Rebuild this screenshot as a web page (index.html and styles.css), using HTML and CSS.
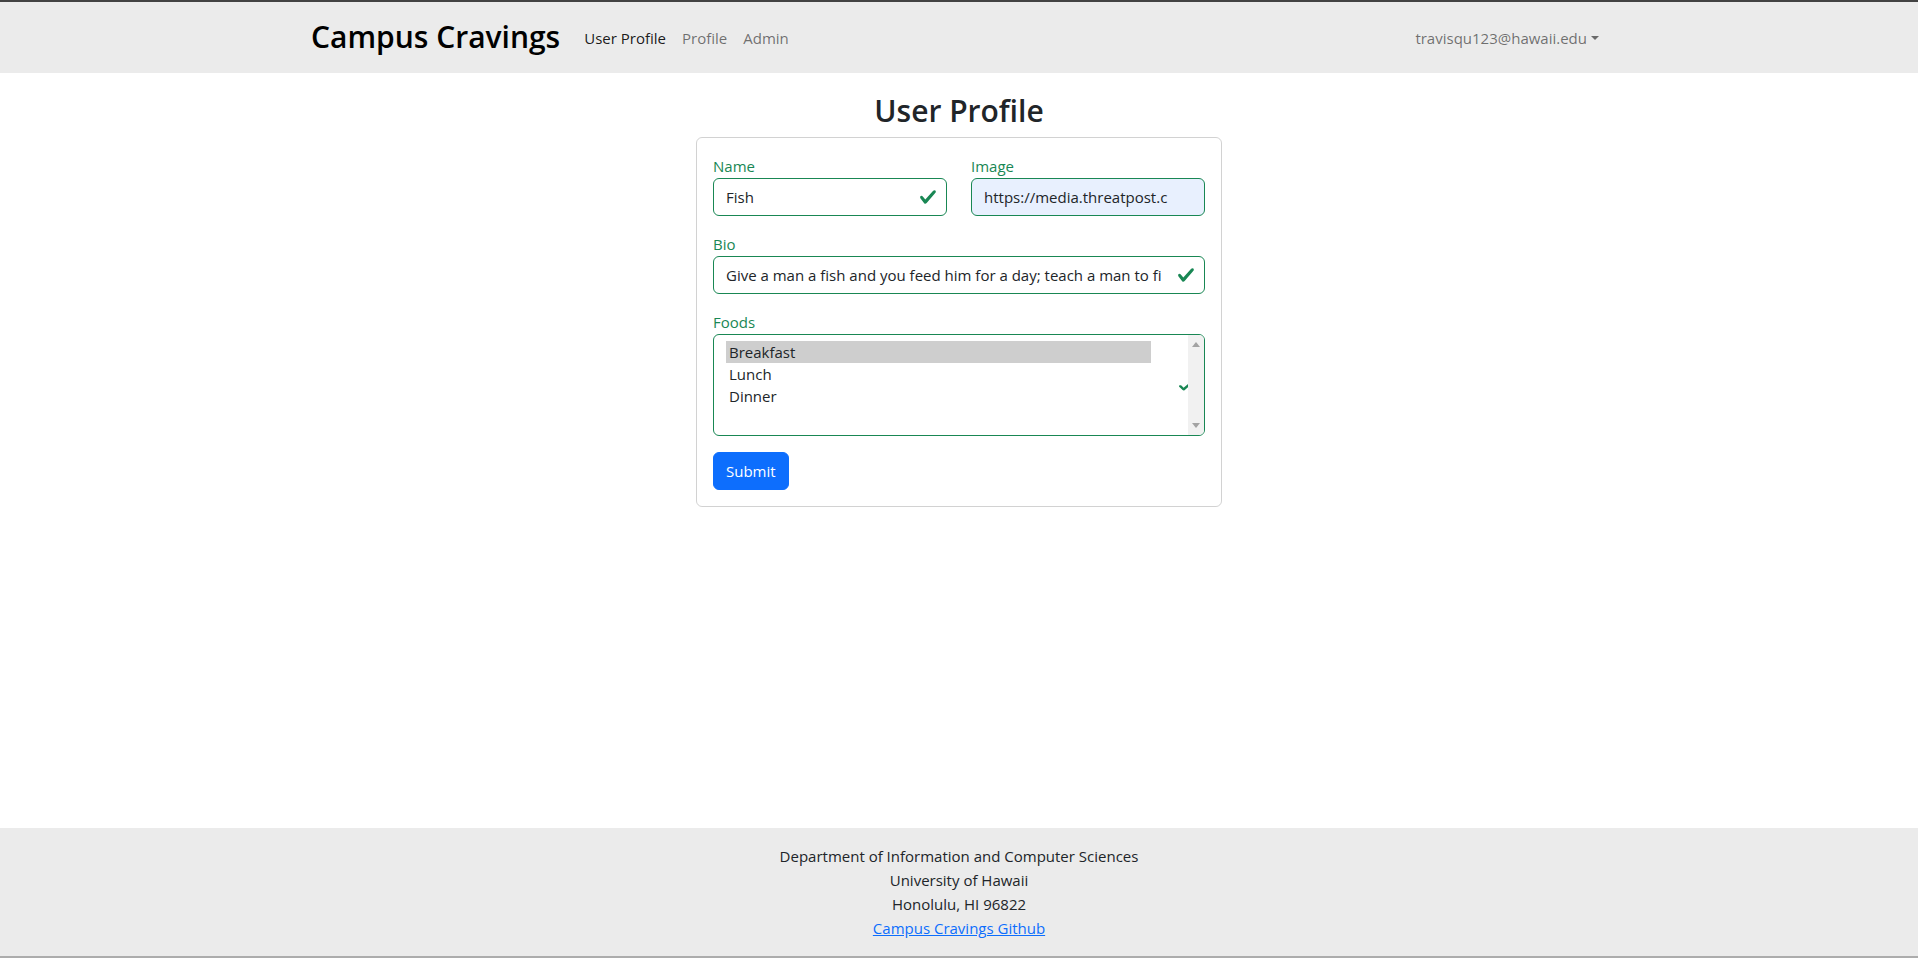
FILE: index.html
```html
<!DOCTYPE html>
<html lang="en">
<head>
<meta charset="utf-8">
<title>Campus Cravings - User Profile</title>
<link rel="stylesheet" href="styles.css">
</head>
<body>
<header class="navbar">
  <div class="container nav-inner">
    <a class="brand" href="#">Campus Cravings</a>
    <nav class="nav-links">
      <a class="nav-link active" href="#">User Profile</a>
      <a class="nav-link" href="#">Profile</a>
      <a class="nav-link" href="#">Admin</a>
    </nav>
    <div class="nav-right">
      <a class="nav-link dropdown-toggle" href="#">travisqu123@hawaii.edu</a>
    </div>
  </div>
</header>

<main class="main">
  <h2 class="page-title">User Profile</h2>
  <form class="card">
    <div class="form-row">
      <div class="field">
        <label class="label">Name</label>
        <div class="input valid">
          <span class="input-text">Fish</span>
          <svg class="check" viewBox="0 0 8 8"><path fill="#198754" d="M2.3 6.73.6 4.53c-.4-1.04.46-1.4 1.1-.8l1.1 1.4 3.4-3.8c.6-.63 1.6-.27 1.2.7l-4 4.6c-.43.5-.8.4-1.1.1z"/></svg>
        </div>
      </div>
      <div class="field">
        <label class="label">Image</label>
        <div class="input autofill">
          <span class="input-text">https://media.threatpost.c</span>
        </div>
      </div>
    </div>
    <div class="field">
      <label class="label">Bio</label>
      <div class="input valid">
        <span class="input-text">Give a man a fish and you feed him for a day; teach a man to fi</span>
        <svg class="check" viewBox="0 0 8 8"><path fill="#198754" d="M2.3 6.73.6 4.53c-.4-1.04.46-1.4 1.1-.8l1.1 1.4 3.4-3.8c.6-.63 1.6-.27 1.2.7l-4 4.6c-.43.5-.8.4-1.1.1z"/></svg>
      </div>
    </div>
    <div class="field">
      <label class="label">Foods</label>
      <div class="listbox" role="listbox">
        <div class="option selected">Breakfast</div>
        <div class="option">Lunch</div>
        <div class="option">Dinner</div>
        <svg class="list-check" viewBox="0 0 8 8" preserveAspectRatio="none"><path fill="#198754" d="M2.3 6.73.6 4.53c-.4-1.04.46-1.4 1.1-.8l1.1 1.4 3.4-3.8c.6-.63 1.6-.27 1.2.7l-4 4.6c-.43.5-.8.4-1.1.1z"/></svg>
        <div class="scrollbar">
          <span class="arrow up"></span>
          <span class="arrow down"></span>
        </div>
      </div>
    </div>
    <div class="actions">
      <button type="button" class="btn">Submit</button>
    </div>
  </form>
</main>

<footer class="footer">
  <div>Department of Information and Computer Sciences</div>
  <div>University of Hawaii</div>
  <div>Honolulu, HI 96822</div>
  <div><a href="#" class="footer-link">Campus Cravings Github</a></div>
</footer>
</body>
</html>
```

FILE: styles.css
```css
* { box-sizing: border-box; }

html, body { height: 100%; }

body {
  margin: 0;
  min-height: 100vh;
  display: flex;
  flex-direction: column;
  font-family: "Open Sans", "Noto Sans", sans-serif;
  font-size: 15px;
  line-height: 24px;
  color: #212529;
  background: #fff;
}

a { text-decoration: none; }

.container {
  width: 100%;
  max-width: 1320px;
  margin: 0 auto;
  padding: 0 12px;
}

/* Navbar */
.navbar {
  background: #ebebeb;
  border-top: 2px solid #424242;
  height: 73px;
  display: flex;
  align-items: center;
}

.nav-inner {
  display: flex;
  align-items: center;
  margin-top: -2px;
}

.brand {
  font-size: 30px;
  font-weight: 600;
  color: #000;
  margin-right: 16px;
  line-height: 40px;
}

.nav-links {
  display: flex;
  align-items: center;
  padding-top: 2px;
}

.nav-link {
  padding: 8px 8px;
  color: rgba(0, 0, 0, 0.55);
  font-size: 15px;
}

.nav-link.active { color: rgba(0, 0, 0, 0.9); }

.nav-right {
  margin-left: auto;
  display: flex;
  padding-top: 2px;
}

.dropdown-toggle::after {
  content: "";
  display: inline-block;
  margin-left: 4px;
  vertical-align: 4px;
  border-top: 4.5px solid;
  border-left: 4px solid transparent;
  border-right: 4px solid transparent;
}

/* Main */
.main {
  flex: 1;
  display: flex;
  flex-direction: column;
  align-items: center;
  padding-top: 19px;
}

.page-title {
  margin: 0 0 7px;
  font-size: 30px;
  font-weight: 600;
  line-height: 38px;
  color: #212529;
}

.card {
  width: 526px;
  border: 1px solid rgba(0, 0, 0, 0.175);
  border-radius: 6px;
  padding: 16px;
  display: flex;
  flex-direction: column;
  gap: 16px;
  margin: 0;
}

.form-row {
  display: grid;
  grid-template-columns: minmax(0, 1fr) minmax(0, 1fr);
  column-gap: 24px;
}

.field {
  display: flex;
  flex-direction: column;
  min-width: 0;
}

.label {
  color: #198754;
  line-height: 24px;
  height: 24px;
}

.input {
  position: relative;
  height: 38px;
  border: 1px solid #198754;
  border-radius: 6px;
  padding: 6px 36px 6px 12px;
  display: flex;
  align-items: center;
  overflow: hidden;
  background: #fff;
}

.input.autofill { background: #e8f0fe; }

.input-text {
  white-space: nowrap;
  display: block;
  color: #212529;
}

.check {
  position: absolute;
  right: 9px;
  top: 9px;
  width: 18px;
  height: 18px;
}

/* Listbox */
.listbox {
  position: relative;
  height: 102px;
  border: 1px solid #198754;
  border-radius: 6px;
  padding: 6px 12px;
  overflow: hidden;
}

.option {
  height: 22px;
  line-height: 22px;
  padding-left: 3px;
  width: 425px;
  color: #212529;
}

.option.selected { background: #cecece; }

.list-check {
  position: absolute;
  left: 464px;
  top: 45px;
  width: 16px;
  height: 12px;
}

.scrollbar {
  position: absolute;
  top: 0;
  right: 0;
  bottom: 0;
  width: 16px;
  background: #f1f1f1;
}

.arrow {
  position: absolute;
  left: 4px;
  width: 0;
  height: 0;
  border-left: 4px solid transparent;
  border-right: 4px solid transparent;
}

.arrow.up {
  top: 7px;
  border-bottom: 5px solid #a3a3a3;
}

.arrow.down {
  bottom: 7px;
  border-top: 5px solid #a3a3a3;
}

.actions { display: flex; }

.btn {
  font-family: inherit;
  font-size: 15px;
  line-height: 24px;
  height: 38px;
  padding: 6px 12px;
  border: 1px solid #0d6efd;
  border-radius: 6px;
  background: #0d6efd;
  color: #fff;
  cursor: pointer;
}

/* Footer */
.footer {
  background: #ebebeb;
  border-bottom: 2px solid #acacac;
  padding: 16px 0;
  text-align: center;
  line-height: 24px;
  color: #212529;
}

.footer-link {
  color: #0d6efd;
  text-decoration: underline;
}
```
